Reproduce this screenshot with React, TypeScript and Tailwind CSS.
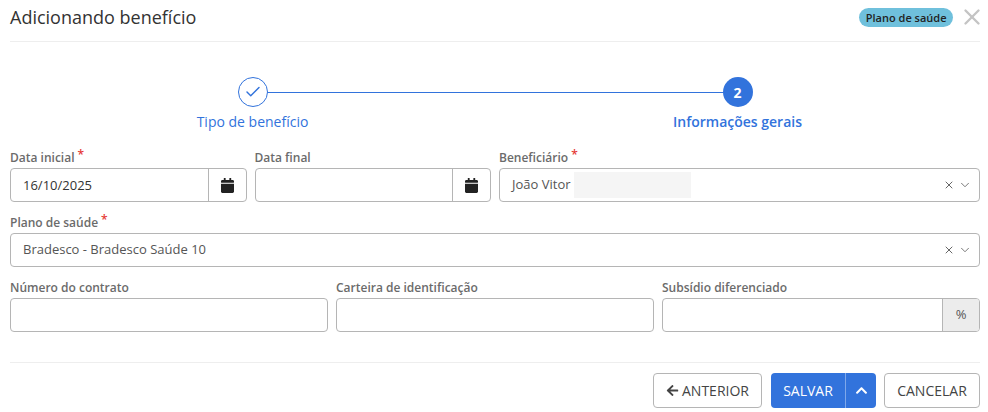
import { Check, ChevronDown, X } from "lucide-react";
import { FaArrowLeft, FaCalendar, FaChevronUp } from "react-icons/fa";

type FieldProps = {
  label: string;
  required?: boolean;
  className: string;
  children: React.ReactNode;
};

function Field({ label, required, className, children }: FieldProps) {
  return (
    <div className={className}>
      <label className="flex h-[19px] items-start text-[12px] leading-[17px] font-semibold text-[#6b6b6b]">
        {label}
        {required && <span className="relative -top-[3px] ml-[3px] text-[12px] leading-[17px] text-[#e53935]">*</span>}
      </label>
      {children}
    </div>
  );
}

function DateInput({ value }: { value?: string }) {
  return (
    <div className="flex h-[34px] overflow-hidden rounded-[4px] border border-[#b5b5b5] bg-white">
      <div className="flex-1 pl-3 text-[13px] leading-[32px] text-[#333]">{value}</div>
      <div className="flex w-[38px] items-center justify-center border-l border-[#b5b5b5]">
        <FaCalendar className="h-[15px] w-[13px] text-[#222]" />
      </div>
    </div>
  );
}

function SelectInput({ value, children }: { value: string; children?: React.ReactNode }) {
  return (
    <div className="flex h-[34px] items-center rounded-[4px] border border-[#b5b5b5] bg-white pr-[7px] pl-3">
      <span className="text-[13px] text-[#555]">{value}</span>
      {children}
      <X className="ml-auto h-[12px] w-[12px] text-[#555]" strokeWidth={1.8} />
      <ChevronDown className="ml-[3px] h-[14px] w-[14px] text-[#666]" strokeWidth={1.5} />
    </div>
  );
}

function Step({ label, active, children }: { label: string; active?: boolean; children: React.ReactNode }) {
  return (
    <div className="relative z-10 flex flex-col items-center">
      <div
        className={
          active
            ? "flex h-[30px] w-[30px] items-center justify-center rounded-full bg-[#3273dc] text-[14px] font-bold text-white"
            : "flex h-[30px] w-[30px] items-center justify-center rounded-full border border-[#3273dc] bg-white text-[#3273dc]"
        }
      >
        {children}
      </div>
      <span className={active ? "mt-[5px] text-[14px] leading-[19px] font-semibold text-[#3273dc]" : "mt-[5px] text-[14px] leading-[19px] text-[#3273dc]"}>
        {label}
      </span>
    </div>
  );
}

export default function App() {
  return (
    <div className="h-[412px] w-[988px] overflow-hidden bg-white pr-[8px] pl-[10px] font-['Open_Sans',sans-serif]">
      <header className="flex h-[42px] items-center justify-between border-b border-[#eeeeee] pb-[7px]">
        <h1 className="text-[18px] leading-[24px] text-[#333]">Adicionando benefício</h1>
        <div className="flex items-center">
          <span className="rounded-full bg-[#6fc0dc] px-[6.5px] py-[1px] text-[11px] leading-[17px] font-semibold text-[#222]">
            Plano de saúde
          </span>
          <X className="mr-[-4.5px] ml-[5.5px] h-[26px] w-[26px] text-[#c4c4c4]" strokeWidth={2.2} />
        </div>
      </header>

      <div className="relative mt-[35px] grid grid-cols-2">
        <div className="absolute top-[15px] left-1/4 h-px w-1/2 bg-[#3273dc]" />
        <Step label="Tipo de benefício">
          <Check className="h-[18px] w-[18px]" strokeWidth={1.9} />
        </Step>
        <Step label="Informações gerais" active>
          2
        </Step>
      </div>

      <form className="mt-[18px] grid grid-cols-12 gap-x-2 gap-y-[12px]">
        <Field label="Data inicial" required className="col-span-3">
          <DateInput value="16/10/2025" />
        </Field>
        <Field label="Data final" className="col-span-3">
          <DateInput />
        </Field>
        <Field label="Beneficiário" required className="col-span-6">
          <SelectInput value="João Vitor">
            <span className="ml-[3px] h-[26px] w-[117px] bg-[#f5f5f5]" />
          </SelectInput>
        </Field>
        <Field label="Plano de saúde" required className="col-span-12">
          <SelectInput value="Bradesco - Bradesco Saúde 10" />
        </Field>
        <Field label="Número do contrato" className="col-span-4">
          <div className="h-[34px] rounded-[4px] border border-[#b5b5b5] bg-white" />
        </Field>
        <Field label="Carteira de identificação" className="col-span-4">
          <div className="h-[34px] rounded-[4px] border border-[#b5b5b5] bg-white" />
        </Field>
        <Field label="Subsídio diferenciado" className="col-span-4">
          <div className="flex h-[34px] overflow-hidden rounded-[4px] border border-[#b5b5b5] bg-white">
            <div className="flex-1" />
            <div className="flex w-[37px] items-center justify-center border-l border-[#b5b5b5] bg-[#ececec] text-[13px] text-[#555]">
              %
            </div>
          </div>
        </Field>
      </form>

      <footer className="mt-[30px] flex justify-end border-t border-[#eeeeee] pt-[10px] text-[14px]">
        <button className="flex h-[35px] w-[109px] items-center justify-center rounded-[4px] border border-[#b5b5b5] bg-white text-[#444]">
          <FaArrowLeft className="mr-[3px] h-[13px] w-[13px]" />
          ANTERIOR
        </button>
        <div className="ml-[9px] flex h-[35px] w-[105px] overflow-hidden rounded-[4px] bg-[#3273dc] text-white">
          <button className="flex-1">SALVAR</button>
          <button className="flex w-[31px] items-center justify-center border-l border-[#7fa8ea]">
            <FaChevronUp className="h-[13px] w-[13px]" />
          </button>
        </div>
        <button className="ml-2 h-[35px] w-[96px] rounded-[4px] border border-[#b5b5b5] bg-white text-[#444]">CANCELAR</button>
      </footer>
    </div>
  );
}
